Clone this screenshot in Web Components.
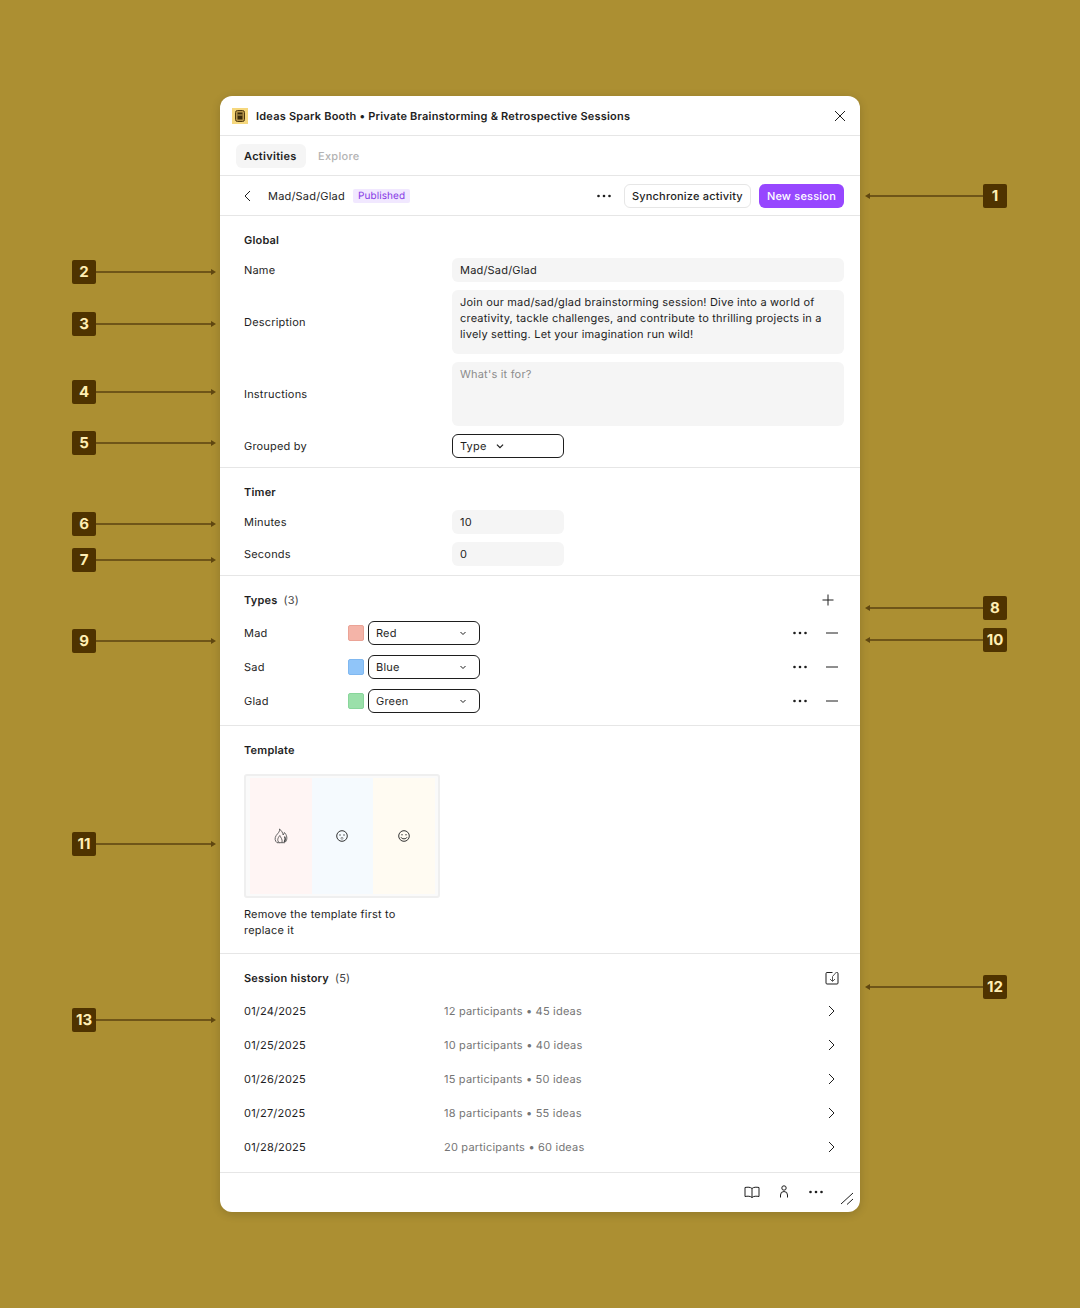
<!DOCTYPE html>
<html lang="en">
<head>
<meta charset="utf-8">
<title>Ideas Spark Booth</title>
<style>
  html, body { margin: 0; padding: 0; }
  body {
    position: relative;
    width: 1080px;
    height: 1308px;
    overflow: hidden;
    background: #ac8f32;
    font-family: Inter, "Liberation Sans", sans-serif;
    font-size: 11px;
    letter-spacing: .2px;
    line-height: 16px;
    color: #1e1e1e;
    text-rendering: geometricPrecision;
  }
</style>
</head>
<body>
<ui-panel>
  <panel-bar slot="header" height="39">
    <ui-icon name="logo" size="16"></ui-icon>
    <b class="title" style="margin-left:8px;font-weight:600;letter-spacing:.21px">Ideas Spark Booth • Private Brainstorming &amp; Retrospective Sessions</b>
    <ui-icon name="close" size="16" style="margin-left:auto"></ui-icon>
  </panel-bar>

  <panel-bar height="39" inset="16">
    <ui-tab active>Activities</ui-tab>
    <ui-tab>Explore</ui-tab>
  </panel-bar>

  <panel-bar height="39" inset="16">
    <ui-icon name="back" size="16" style="margin-left:4px"></ui-icon>
    <span style="margin-left:12px">Mad/Sad/Glad</span>
    <ui-badge style="margin-left:8px">Published</ui-badge>
    <ui-icon name="dots" size="16" style="margin-left:auto;margin-right:12px"></ui-icon>
    <ui-button>Synchronize activity</ui-button>
    <ui-button primary style="margin-left:8px">New session</ui-button>
  </panel-bar>

  <panel-section heading="Global">
    <div style="display:grid;gap:8px">
      <field-row label="Name"><ui-input>Mad/Sad/Glad</ui-input></field-row>
      <field-row label="Description"><ui-input lines="64">Join our mad/sad/glad brainstorming session! Dive into a world of creativity, tackle challenges, and contribute to thrilling projects in a lively setting. Let your imagination run wild!</ui-input></field-row>
      <field-row label="Instructions"><ui-input lines="64" placeholder>What's it for?</ui-input></field-row>
      <field-row label="Grouped by"><ui-select width="112" chevron="loose">Type</ui-select></field-row>
    </div>
  </panel-section>

  <panel-section heading="Timer">
    <div style="display:grid;gap:8px">
      <field-row label="Minutes"><ui-input width="112">10</ui-input></field-row>
      <field-row label="Seconds"><ui-input width="112">0</ui-input></field-row>
    </div>
  </panel-section>

  <panel-section heading="Types" count="3" tail="12" gap="5">
    <ui-icon slot="action" name="plus" size="16" style="margin-right:8px"></ui-icon>
    <div style="display:grid;gap:10px">
      <type-row label="Mad" swatch="#f4b4a8" edge="#eba396">Red</type-row>
      <type-row label="Sad" swatch="#90c5f9" edge="#80b8f0">Blue</type-row>
      <type-row label="Glad" swatch="#9be0aa" edge="#89d69b">Green</type-row>
    </div>
  </panel-section>

  <panel-section heading="Template" tail="15" gap="8">
    <template-preview></template-preview>
    <div style="width:190px;margin-top:8px">Remove the template first to replace it</div>
  </panel-section>

  <panel-section heading="Session history" count="5" tail="8" gap="0">
    <ui-icon slot="action" name="checkout" size="16" style="margin-right:4px"></ui-icon>
    <history-row date="01/24/2025">12 participants • 45 ideas</history-row>
    <history-row date="01/25/2025">10 participants • 40 ideas</history-row>
    <history-row date="01/26/2025">15 participants • 50 ideas</history-row>
    <history-row date="01/27/2025">18 participants • 55 ideas</history-row>
    <history-row date="01/28/2025">20 participants • 60 ideas</history-row>
  </panel-section>

  <panel-foot slot="footer"></panel-foot>
</ui-panel>

<call-out n="1" y="196" side="right"></call-out>
<call-out n="2" y="272"></call-out>
<call-out n="3" y="324"></call-out>
<call-out n="4" y="392"></call-out>
<call-out n="5" y="443"></call-out>
<call-out n="6" y="524"></call-out>
<call-out n="7" y="560"></call-out>
<call-out n="8" y="608" side="right"></call-out>
<call-out n="9" y="641"></call-out>
<call-out n="10" y="640" side="right"></call-out>
<call-out n="11" y="844"></call-out>
<call-out n="12" y="987" side="right"></call-out>
<call-out n="13" y="1020"></call-out>

<script>
const ICONS = {
  close: '<path d="M3 3l10 10M13 3L3 13" fill="none" stroke="#1e1e1e"/>',
  back: '<path d="M10 3L5 8l5 5" fill="none" stroke="#1e1e1e"/>',
  next: '<path d="M5 3l5 5-5 5" fill="none" stroke="#1e1e1e"/>',
  dots: '<circle cx="2.500" cy="8" r="1.300" fill="#1e1e1e"/><circle cx="8" cy="8" r="1.300" fill="#1e1e1e"/><circle cx="13.500" cy="8" r="1.300" fill="#1e1e1e"/>',
  plus: '<path d="M8 2.500v11M2.500 8h11" fill="none" stroke="#1e1e1e"/>',
  minus: '<path d="M2 8h12" fill="none" stroke="#1e1e1e"/>',
  chevron: '<path d="M5.500 7l2.500 2.500L10.500 7" fill="none" stroke="#1e1e1e"/>',
  chevronBold: '<path d="M4.500 6.500L8 10l3.500-3.500" fill="none" stroke="#1e1e1e" stroke-width="1.400"/>',
  checkout: '<path d="M8.500 2.500H3a1 1 0 0 0-1 1v9.500a1 1 0 0 0 1 1h10a1 1 0 0 0 1-1V3.500a1 1 0 0 0-1-1h-.500" fill="none" stroke="#1e1e1e"/><path d="M12.500 2L8.500 6.500v4.500M6 9l2.500 2.500L11 9" fill="none" stroke="#555"/>',
  book: '<path d="M8 4.500C6.500 3 3.500 3 1 3.500v9c2.500-.5 5.500-.5 7 1 1.500-1.500 4.500-1.500 7-1v-9C12.500 3 9.500 3 8 4.500zM8 4.500v9" fill="none" stroke="#1e1e1e"/>',
  person: '<circle cx="8" cy="4" r="2.200" fill="none" stroke="#1e1e1e"/><path d="M4.500 13.500V11a3.500 3.500 0 0 1 7 0v2.500" fill="none" stroke="#1e1e1e"/>',
  resize: '<path d="M2 14L14 3M8 14.500L14 9" fill="none" stroke="#1e1e1e"/>',
  logo: '<rect width="16" height="16" fill="#f6d87e"/><rect x="3.500" y="2.500" width="9" height="11" rx="2" fill="#b8964a" stroke="#4f3a10"/><rect x="5.500" y="4.500" width="5" height="7" fill="#3a2a0a"/><rect x="5.500" y="6.500" width="5" height="1" fill="#c9a95a"/>',
  flame: '<path d="M6.500 1C7.200 3.500 5 5 3.200 7.500 1.500 10 1.800 13 4 14.700h7.500c2.500-1.700 3-5 1.500-8-.5-1.200-1.200-2-1.700-2.200-.1 1.200-.5 2-1.200 2.500C10 5 8.500 2.500 6.500 1z" fill="none" stroke="#555" stroke-width=".9"/><path d="M6.500 14.700C3.800 13 4.500 10.300 6.800 7.500c.5 1.800 3 3.200 2.200 7.200" fill="none" stroke="#555" stroke-width=".9"/><path d="M11.500 8.500c1 1.700 1 3.800-.3 5.500" fill="none" stroke="#444" stroke-width="1.300"/>',
  sad: '<circle cx="8" cy="8" r="5.300" fill="none" stroke="#333"/><circle cx="6" cy="7" r=".7" fill="#333"/><circle cx="10" cy="7" r=".7" fill="#333"/><circle cx="8" cy="10.300" r="1" fill="none" stroke="#777" stroke-width=".8"/>',
  glad: '<circle cx="8" cy="8" r="5.300" fill="none" stroke="#333"/><circle cx="6" cy="6.800" r=".7" fill="#333"/><circle cx="10" cy="6.800" r=".7" fill="#333"/><path d="M5 9.300c.8 2 5.200 2 6 0" fill="none" stroke="#333"/>',
};

class UiIcon extends HTMLElement {
  connectedCallback() {
    const size = this.getAttribute('size') || 16;
    const root = this.attachShadow({ mode: 'open' });
    root.innerHTML = `
      <style>:host{display:inline-flex;flex:none;width:${size}px;height:${size}px}svg{display:block}</style>
      <svg width="${size}" height="${size}" viewBox="0 0 16 16">${ICONS[this.getAttribute('name')]}</svg>`;
  }
}

const panelTemplate = document.createElement('template');
panelTemplate.innerHTML = `
<style>
  :host{
    display:flex;
    flex-direction:column;
    position:absolute;
    left:220px;
    top:96px;
    width:640px;
    height:1116px;
    background:#fff;
    border-radius:12px;
    box-shadow:0 2px 10px rgba(0,0,0,.16);
    overflow:hidden;
  }
  .grow{flex:1;min-height:0}
</style>
<slot name="header"></slot>
<div class="grow"><slot></slot></div>
<slot name="footer"></slot>
`;
class UiPanel extends HTMLElement {
  constructor() {
    super();
    this.attachShadow({ mode: 'open' }).appendChild(panelTemplate.content.cloneNode(true));
  }
}

class PanelBar extends HTMLElement {
  connectedCallback() {
    const height = this.getAttribute('height');
    const inset = this.getAttribute('inset') || 12;
    this.attachShadow({ mode: 'open' }).innerHTML = `
      <style>
        :host{
          display:flex;
          align-items:center;
          height:${height}px;
          padding:0 ${inset}px;
          border-bottom:1px solid #e6e6e6;
        }
      </style>
      <slot></slot>`;
  }
}

class UiTab extends HTMLElement {
  connectedCallback() {
    const active = this.hasAttribute('active');
    this.attachShadow({ mode: 'open' }).innerHTML = `
      <style>
        :host{
          display:flex;
          align-items:center;
          box-sizing:border-box;
          width:${active ? 70 : 56}px;
          height:24px;
          padding:0 ${active ? 8 : 8}px;
          margin-right:4px;
          border-radius:6px;
          letter-spacing:.3px;
          font-weight:${active ? 600 : 500};
          color:${active ? '#1e1e1e' : '#b3b3b3'};
          background:${active ? '#f5f5f5' : 'transparent'};
        }
      </style>
      <slot></slot>`;
  }
}

class UiBadge extends HTMLElement {
  constructor() {
    super();
    this.attachShadow({ mode: 'open' }).innerHTML = `
      <style>
        :host{
          display:inline-flex;
          align-items:center;
          height:14px;
          padding:0 5px;
          border-radius:2px;
          font-size:10px;
          letter-spacing:.1px;
          color:#8638e5;
          background:#f1e8ff;
        }
      </style>
      <slot></slot>`;
  }
}

class UiButton extends HTMLElement {
  connectedCallback() {
    const primary = this.hasAttribute('primary');
    this.attachShadow({ mode: 'open' }).innerHTML = `
      <style>
        :host{
          display:inline-flex;
          align-items:center;
          box-sizing:border-box;
          height:24px;
          padding:0 ${primary ? 8 : 7}px;
          border-radius:6px;
          font-weight:500;
          letter-spacing:.2px;
          border:${primary ? '0' : '1px solid #e6e6e6'};
          color:${primary ? '#fff' : '#1e1e1e'};
          background:${primary ? '#9747ff' : '#fff'};
        }
      </style>
      <slot></slot>`;
  }
}

const sectionTemplate = document.createElement('template');
sectionTemplate.innerHTML = `
<style>
  :host{
    display:block;
    padding:8px 16px 9px 24px;
    border-bottom:1px solid #e6e6e6;
  }
  .head{
    display:flex;
    align-items:center;
    height:32px;
    margin-bottom:2px;
  }
  h2{
    margin:0;
    font:inherit;
    font-weight:600;
  }
  .count{
    margin-left:6px;
    color:#444;
  }
  .action{
    margin-left:auto;
    display:flex;
  }
</style>
<div class="head"><h2></h2><span class="count"></span><div class="action"><slot name="action"></slot></div></div>
<slot></slot>
`;
class PanelSection extends HTMLElement {
  connectedCallback() {
    const root = this.attachShadow({ mode: 'open' });
    root.appendChild(sectionTemplate.content.cloneNode(true));
    root.querySelector('h2').textContent = this.getAttribute('heading');
    if (this.hasAttribute('count')) root.querySelector('.count').textContent = `(${this.getAttribute('count')})`;
    if (this.hasAttribute('tail')) this.style.paddingBottom = `${this.getAttribute('tail')}px`;
    if (this.hasAttribute('gap')) root.querySelector('.head').style.marginBottom = `${this.getAttribute('gap')}px`;
  }
}

class FieldRow extends HTMLElement {
  connectedCallback() {
    const root = this.attachShadow({ mode: 'open' });
    root.innerHTML = `
      <style>
        :host{display:grid;grid-template-columns:208px 392px;align-items:center}
      </style>
      <div class="label"></div>
      <div><slot></slot></div>`;
    root.querySelector('.label').textContent = this.getAttribute('label');
  }
}

class UiInput extends HTMLElement {
  connectedCallback() {
    const height = this.getAttribute('lines') || 24;
    const width = this.getAttribute('width');
    this.attachShadow({ mode: 'open' }).innerHTML = `
      <style>
        :host{
          display:block;
          box-sizing:border-box;
          ${width ? `width:${width}px;` : ''}
          height:${height}px;
          padding:4px 8px;
          border-radius:6px;
          background:#f5f5f5;
          color:${this.hasAttribute('placeholder') ? '#8c8c8c' : '#1e1e1e'};
        }
      </style>
      <slot></slot>`;
  }
}

class UiSelect extends HTMLElement {
  connectedCallback() {
    const loose = this.getAttribute('chevron') === 'loose';
    this.attachShadow({ mode: 'open' }).innerHTML = `
      <style>
        :host{
          display:flex;
          align-items:center;
          box-sizing:border-box;
          width:${this.getAttribute('width')}px;
          height:24px;
          padding:0 8px 0 7px;
          border:1px solid #1e1e1e;
          border-radius:6px;
          background:#fff;
        }
        ui-icon{${loose ? 'margin-left:6px' : 'margin-left:auto'}}
      </style>
      <slot></slot>
      <ui-icon name="${loose ? 'chevronBold' : 'chevron'}" size="${loose ? 14 : 16}"></ui-icon>`;
  }
}

class TypeRow extends HTMLElement {
  connectedCallback() {
    const root = this.attachShadow({ mode: 'open' });
    root.innerHTML = `
      <style>
        :host{display:flex;align-items:center;height:24px}
        .label{width:104px}
        .swatch{
          box-sizing:border-box;
          width:16px;
          height:16px;
          margin-right:4px;
          border-radius:2px;
          background:${this.getAttribute('swatch')};
          border:1px solid ${this.getAttribute('edge')};
        }
        .tools{margin-left:auto;margin-right:4px;display:flex;gap:16px}
      </style>
      <div class="label"></div>
      <div class="swatch"></div>
      <ui-select width="112"><slot></slot></ui-select>
      <div class="tools"><ui-icon name="dots" size="16"></ui-icon><ui-icon name="minus" size="16"></ui-icon></div>`;
    root.querySelector('.label').textContent = this.getAttribute('label');
  }
}

class TemplatePreview extends HTMLElement {
  constructor() {
    super();
    this.attachShadow({ mode: 'open' }).innerHTML = `
      <style>
        :host{
          display:grid;
          grid-template-columns:repeat(3,1fr);
          box-sizing:border-box;
          width:196px;
          height:124px;
          padding:2px 3px 2px 4px;
          border:2px solid #efefef;
          border-radius:3px;
          background:#fafafa;
        }
        div{display:flex;align-items:center;justify-content:center}
      </style>
      <div style="background:#fff5f4"><ui-icon name="flame" size="16"></ui-icon></div>
      <div style="background:#f5fafe"><ui-icon name="sad" size="16"></ui-icon></div>
      <div style="background:#fffbf2"><ui-icon name="glad" size="16"></ui-icon></div>`;
  }
}

class HistoryRow extends HTMLElement {
  connectedCallback() {
    const root = this.attachShadow({ mode: 'open' });
    root.innerHTML = `
      <style>
        :host{display:flex;align-items:center;height:34px}
        .date{width:200px}
        .meta{color:#757575}
        ui-icon{margin-left:auto;margin-right:4px}
      </style>
      <div class="date"></div>
      <div class="meta"><slot></slot></div>
      <ui-icon name="next" size="16"></ui-icon>`;
    root.querySelector('.date').textContent = this.getAttribute('date');
  }
}

class PanelFoot extends HTMLElement {
  constructor() {
    super();
    this.attachShadow({ mode: 'open' }).innerHTML = `
      <style>
        :host{
          display:flex;
          align-items:center;
          justify-content:flex-end;
          position:relative;
          height:37px;
          padding:0 36px 2px 0;
          border-top:1px solid #e6e6e6;
          gap:16px;
        }
        .resize{position:absolute;right:5px;bottom:6px}
      </style>
      <ui-icon name="book" size="16"></ui-icon>
      <ui-icon name="person" size="16"></ui-icon>
      <ui-icon name="dots" size="16"></ui-icon>
      <ui-icon class="resize" name="resize" size="16"></ui-icon>`;
  }
}

// numbered markers sit on the free canvas around the panel
class CallOut extends HTMLElement {
  connectedCallback() {
    const right = this.getAttribute('side') === 'right';
    const root = this.attachShadow({ mode: 'open' });
    root.innerHTML = `
      <style>
        :host{
          display:flex;
          align-items:center;
          flex-direction:${right ? 'row-reverse' : 'row'};
          position:absolute;
          left:${right ? 865 : 72}px;
          width:${right ? 142 : 144}px;
          height:24px;
          top:${Number(this.getAttribute('y')) - 12}px;
          letter-spacing:0;
        }
        .badge{
          flex:none;
          display:flex;
          align-items:center;
          justify-content:center;
          width:24px;
          height:24px;
          border-radius:2px;
          background:#4f3300;
          color:#ffeeb3;
          font:700 15px/24px Inter, "Liberation Sans", sans-serif;
        }
        .line{flex:1;height:2px;background:#6f5518}
        svg{display:block;flex:none}
      </style>
      <div class="badge"></div>
      <div class="line"></div>
      <svg width="5" height="6" viewBox="0 0 5 6"><path d="${right ? 'M5 0L0 3l5 3z' : 'M0 0l5 3-5 3z'}" fill="#5f4610"/></svg>`;
    root.querySelector('.badge').textContent = this.getAttribute('n');
  }
}

customElements.define('ui-icon', UiIcon);
customElements.define('ui-panel', UiPanel);
customElements.define('panel-bar', PanelBar);
customElements.define('ui-tab', UiTab);
customElements.define('ui-badge', UiBadge);
customElements.define('ui-button', UiButton);
customElements.define('panel-section', PanelSection);
customElements.define('field-row', FieldRow);
customElements.define('ui-input', UiInput);
customElements.define('ui-select', UiSelect);
customElements.define('type-row', TypeRow);
customElements.define('template-preview', TemplatePreview);
customElements.define('history-row', HistoryRow);
customElements.define('panel-foot', PanelFoot);
customElements.define('call-out', CallOut);
</script>
</body>
</html>
